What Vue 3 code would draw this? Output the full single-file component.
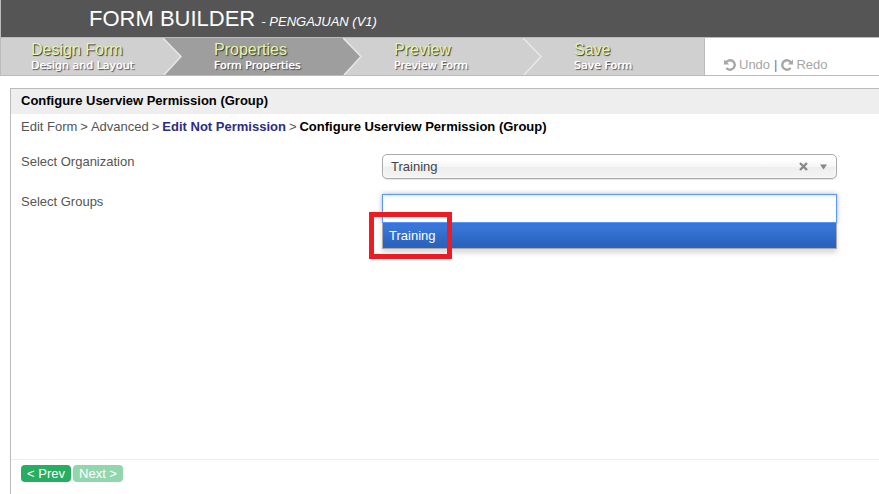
<script setup>
import { ref } from 'vue'

const steps = [
  { title: 'Design Form', note: 'Design and Layout' },
  { title: 'Properties', note: 'Form Properties' },
  { title: 'Preview', note: 'Preview Form' },
  { title: 'Save', note: 'Save Form' },
]
const current = ref(1)
const organization = ref('Training')
const groups = ref('')
</script>

<template>
  <div class="page">
    <header class="header">
      <h1>FORM BUILDER <small>- PENGAJUAN (V1)</small></h1>
    </header>

    <div class="toolbar">
      <nav class="steps">
        <a
          v-for="(step, i) in steps"
          :key="step.title"
          href="#"
          class="step"
          :class="{ active: i === current }"
          @click.prevent="current = i"
        >
          <span class="step-title">{{ step.title }}</span>
          <span class="step-note">{{ step.note }}</span>
          <svg v-if="i < steps.length - 1" class="chevron" viewBox="0 0 19 37" aria-hidden="true">
            <path d="M0 0H19V37H0Z" :fill="i + 1 === current ? '#9e9e9e' : '#d0d0d0'" />
            <path d="M0 0L18 18.500L1 37H0Z" :fill="i === current ? '#9e9e9e' : '#d0d0d0'" />
            <path d="M0 0L18 18.500L1 37" fill="none" stroke="#e8e8e8" stroke-width="1.500" />
          </svg>
        </a>
      </nav>
      <div class="history">
        <button type="button">
          <svg viewBox="0 0 12 12" aria-hidden="true">
            <path d="M2 3.600A4.700 4.700 0 1 1 2.400 9" fill="none" stroke="currentColor" stroke-width="2.400" />
            <path d="M0 0.500V5.500H5.200Z" fill="currentColor" />
          </svg>
          Undo
        </button>
        <span class="bar">|</span>
        <button type="button">
          <svg viewBox="0 0 12 12" aria-hidden="true">
            <path d="M10 3.600A4.700 4.700 0 1 0 9.600 9" fill="none" stroke="currentColor" stroke-width="2.400" />
            <path d="M12 0.500V5.500H6.800Z" fill="currentColor" />
          </svg>
          Redo
        </button>
      </div>
    </div>

    <main class="panel">
      <h2>Configure Userview Permission (Group)</h2>
      <div class="crumbs">
        <a href="#">Edit Form</a>
        <span>&gt;</span>
        <a href="#">Advanced</a>
        <span>&gt;</span>
        <a href="#" class="linked">Edit Not Permission</a>
        <span>&gt;</span>
        <strong>Configure Userview Permission (Group)</strong>
      </div>

      <form class="fields" @submit.prevent>
        <div class="field">
          <label for="organization">Select Organization</label>
          <div class="control">
            <select id="organization" v-model="organization">
              <option value=""></option>
              <option>Training</option>
            </select>
            <button type="button" class="clear" aria-label="Clear" @click="organization = ''">
              <svg viewBox="0 0 9 9" aria-hidden="true">
                <path d="M1 1L8 8M8 1L1 8" stroke="#888" stroke-width="2.400" />
              </svg>
            </button>
            <svg class="arrow" viewBox="0 0 7 6" aria-hidden="true"><path d="M0 0.500H7L3.500 5.500Z" fill="#888" /></svg>
          </div>
        </div>
        <div class="field">
          <label for="groups">Select Groups</label>
          <div class="control">
            <input id="groups" v-model="groups" type="text" autocomplete="off" />
            <ul class="options">
              <li><button type="button" @click="groups = 'Training'">Training</button></li>
            </ul>
            <div class="highlight"></div>
          </div>
        </div>
      </form>

      <footer class="actions">
        <button type="button">&lt; Prev</button>
        <button type="button" disabled>Next &gt;</button>
      </footer>
    </main>
  </div>
</template>

<style>
body {
  background: #fff;
}
</style>

<style scoped>
* {
  box-sizing: border-box;
}
.page {
  display: flex;
  flex-direction: column;
  min-height: 100vh;
  overflow: hidden;
  font: 13px/16px "Liberation Sans", Arial, sans-serif;
  color: #555;
}
button,
input,
select {
  font: inherit;
}
a {
  color: inherit;
  text-decoration: none;
}
.header {
  padding: 0 88px;
  border-left: 1px solid #bbb;
  background: #555;
}
h1 {
  margin: 0;
  font-size: 22px;
  line-height: 37px;
  font-weight: 400;
  color: #fff;
}
h1 small {
  font-size: 13px;
  line-height: 16px;
  font-style: italic;
}
.toolbar {
  display: flex;
  border: solid #bbb;
  border-width: 1px 0 1px 1px;
}
.steps {
  display: flex;
  border-right: 1px solid #bbb;
}
.step {
  position: relative;
  display: flex;
  flex-direction: column;
  width: 180px;
  height: 37px;
  padding: 3px 0 0 32px;
  background: #d0d0d0;
  color: #fff;
}
.step:first-child {
  width: 181px;
  padding-left: 30px;
}
.step:last-child {
  width: 162px;
}
.step.active {
  background: #9e9e9e;
}
.step-title {
  font-size: 16px;
  line-height: 18px;
  color: #e4f5a8;
  text-shadow: 1px 1px 1px #333;
}
.step-note {
  font: 11px/13px "DejaVu Sans", Verdana, sans-serif;
  text-shadow: 0 0 1px #fff, 1px 1px 1px #333;
}
.chevron {
  position: absolute;
  top: 0;
  right: 0;
  width: 19px;
  height: 37px;
}
.history {
  display: flex;
  align-items: flex-end;
  gap: 4px;
  padding: 0 0 2px 19px;
  color: #a6a6a6;
}
.history button {
  display: flex;
  align-items: center;
  gap: 3px;
  padding: 0;
  border: 0;
  background: none;
  color: inherit;
}
.history svg {
  width: 12px;
  height: 12px;
}
.bar {
  color: #777;
}
.panel {
  flex: 1;
  display: flex;
  flex-direction: column;
  margin: 12px 0 0 10px;
  border: solid #bbb;
  border-width: 1px 0 0 1px;
}
h2 {
  margin: 0;
  padding: 4px 10px 5px;
  background: #eee;
  font-size: 13px;
  line-height: 16px;
  color: #000;
}
.crumbs {
  display: flex;
  gap: 3px;
  padding: 5px 10px;
}
.linked {
  font-weight: 700;
  color: #2c2c84;
}
.crumbs strong {
  color: #000;
}
.fields {
  flex: 1;
  display: flex;
  flex-direction: column;
  gap: 15px;
  padding: 14px 42px 20px 10px;
}
.field {
  display: grid;
  grid-template-columns: 361fr 455fr;
}
.control {
  position: relative;
}
.control select {
  display: block;
  width: 100%;
  height: 25px;
  padding: 0 50px 0 8px;
  appearance: none;
  border: 1px solid #aaa;
  border-radius: 5px;
  background: linear-gradient(#fff 20%, #f6f6f6 50%, #eee 52%, #f4f4f4 100%);
  box-shadow: 0 0 3px #fff inset, 0 1px 1px rgba(0, 0, 0, 0.1);
  color: #444;
}
.clear {
  position: absolute;
  top: 8px;
  right: 29px;
  display: flex;
  padding: 0;
  border: 0;
  background: none;
}
.clear svg {
  width: 9px;
  height: 9px;
}
.arrow {
  position: absolute;
  top: 10px;
  right: 10px;
  width: 7px;
  height: 6px;
  pointer-events: none;
}
.control input {
  display: block;
  width: 100%;
  height: 29px;
  padding: 0 6px;
  border: 1px solid #5897fb;
  outline: 0;
  background: linear-gradient(#eee, #fff 15%);
  box-shadow: 0 0 5px rgba(0, 0, 0, 0.3);
}
.options {
  position: absolute;
  top: 29px;
  left: 0;
  right: 0;
  margin: 0;
  padding: 0;
  list-style: none;
  border: solid #aaa;
  border-width: 0 1px 1px;
  box-shadow: 0 4px 5px rgba(0, 0, 0, 0.15);
}
.options button {
  display: block;
  width: 100%;
  height: 25px;
  padding: 0 6px;
  border: 0;
  background: linear-gradient(#3875d7 20%, #2a62bc 90%);
  color: #fff;
  text-align: left;
}
.highlight {
  position: absolute;
  top: 18px;
  left: -13px;
  width: 83px;
  height: 47px;
  border: 5px solid #ed1c24;
  pointer-events: none;
}
.actions {
  display: flex;
  gap: 2px;
  padding: 5px 10px 12px;
  border-top: 1px solid #eee;
}
.actions button {
  width: 50px;
  height: 17px;
  padding: 0;
  border: 0;
  border-radius: 4px;
  background: #27ae60;
  color: #fff;
  line-height: 17px;
}
.actions button:disabled {
  opacity: 0.5;
}
</style>
